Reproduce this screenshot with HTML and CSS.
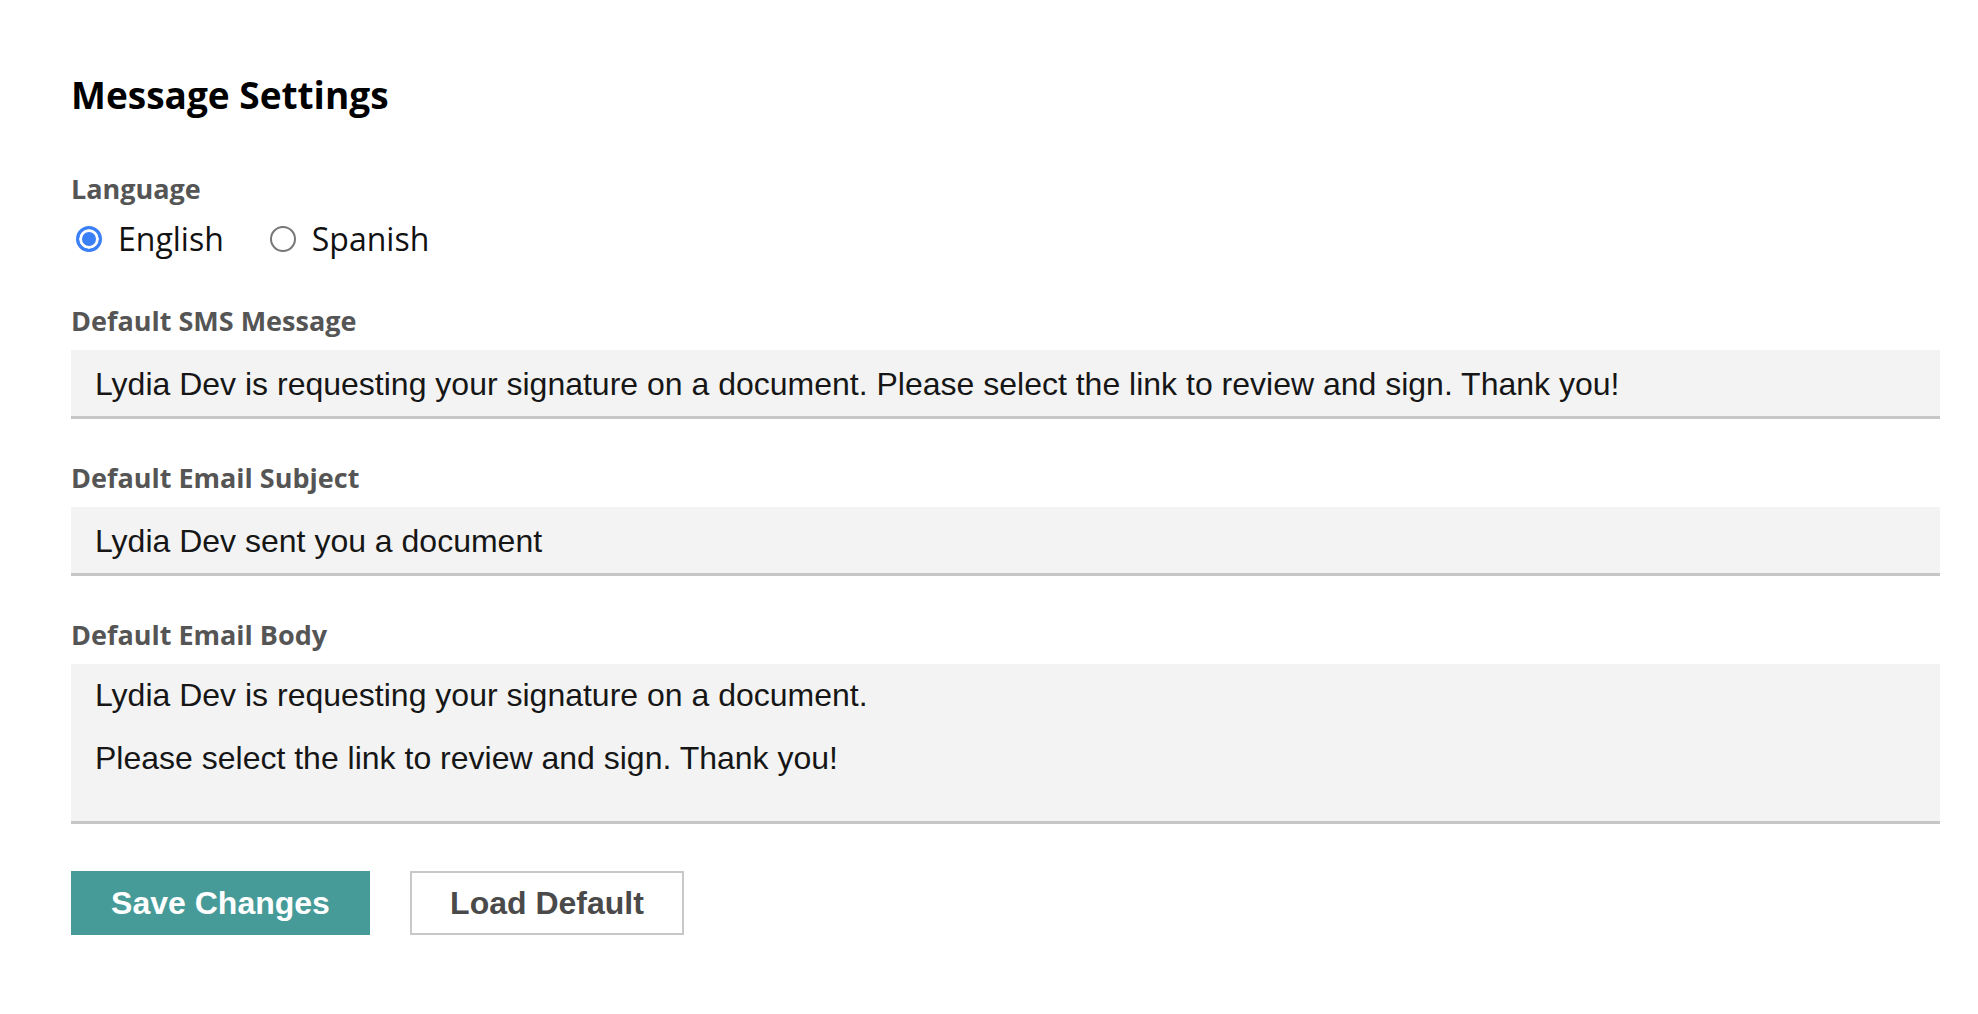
FILE: index.html
```html
<!DOCTYPE html>
<html lang="en">
<head>
<meta charset="utf-8">
<title>Message Settings</title>
<link rel="stylesheet" href="styles.css">
</head>
<body>
<main class="page">
  <h1 class="title">Message Settings</h1>

  <section class="field field-lang">
    <div class="label">Language</div>
    <div class="radios">
      <label class="radio"><input type="radio" name="lang" checked><span>English</span></label>
      <label class="radio"><input type="radio" name="lang"><span>Spanish</span></label>
    </div>
  </section>

  <section class="field field-sms">
    <div class="label">Default SMS Message</div>
    <div class="input">Lydia Dev is requesting your signature on a document. Please select the link to review and sign. Thank you!</div>
  </section>

  <section class="field">
    <div class="label">Default Email Subject</div>
    <div class="input">Lydia Dev sent you a document</div>
  </section>

  <section class="field">
    <div class="label">Default Email Body</div>
    <div class="input textarea">
      <p>Lydia Dev is requesting your signature on a document.</p>
      <p>Please select the link to review and sign. Thank you!</p>
    </div>
  </section>

  <div class="actions">
    <button class="btn btn-primary" type="button">Save Changes</button>
    <button class="btn btn-secondary" type="button">Load Default</button>
  </div>
</main>
</body>
</html>
```

FILE: styles.css
```css
* { box-sizing: border-box; }

html, body {
  margin: 0;
  background: #ffffff;
}

.page {
  padding: 72px 38px 0 71px;
  font-family: "Open Sans", "Noto Sans", sans-serif;
  color: #000;
}

.title {
  margin: 0;
  font-size: 37px;
  line-height: 46px;
  font-weight: 700;
  color: #000;
}

.field {
  display: flex;
  flex-direction: column;
  margin-top: 41px;
}

.field-lang {
  margin-top: 53px;
}

.field-sms {
  margin-top: 44px;
}

.label {
  font-size: 27px;
  line-height: 36px;
  font-weight: 700;
  color: #555555;
}

.radios {
  display: flex;
  gap: 46px;
  margin-top: 12px;
  padding-left: 5px;
}

.radio {
  display: flex;
  align-items: center;
  gap: 16px;
  font-size: 32px;
  line-height: 40px;
  color: #111;
}

.radio input {
  appearance: none;
  -webkit-appearance: none;
  margin: 0;
  width: 26px;
  height: 26px;
  border-radius: 50%;
  border: 2px solid #777777;
  background: #fff;
}

.radio input:checked {
  border: 3px solid #3a7ff6;
  background: #3a7ff6;
  box-shadow: inset 0 0 0 3px #ffffff;
}

.input {
  margin-top: 11px;
  background: #f3f3f3;
  border-bottom: 3px solid #c6c6c6;
  padding: 16px 24px 14px;
  font-family: "Liberation Sans", Arial, sans-serif;
  font-size: 32px;
  line-height: 36px;
  color: #161616;
  white-space: nowrap;
}

.textarea {
  height: 160px;
  padding-top: 13px;
  white-space: normal;
}

.textarea p {
  margin: 0 0 27px;
}

.actions {
  display: flex;
  gap: 40px;
  margin-top: 47px;
}

.btn {
  height: 64px;
  font-family: "Liberation Sans", Arial, sans-serif;
  font-size: 32px;
  font-weight: 700;
  cursor: pointer;
}

.btn-primary {
  width: 299px;
  background: #469b98;
  border: none;
  color: #ffffff;
}

.btn-secondary {
  width: 274px;
  background: #ffffff;
  border: 2px solid #c8c8c8;
  color: #4a4a4a;
}
```
